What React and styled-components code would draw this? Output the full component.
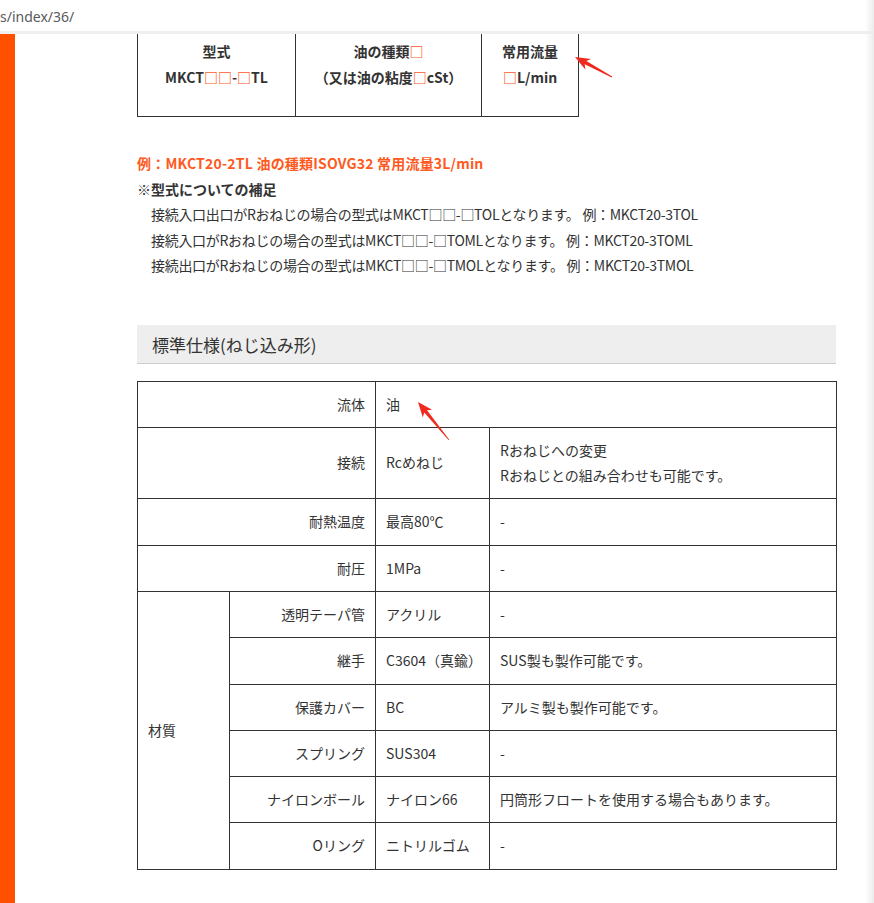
import styled, { createGlobalStyle } from 'styled-components';

const GlobalStyle = createGlobalStyle`
  html, body {
    margin: 0;
    padding: 0;
    background: #ffffff;
  }
  body {
    font-family: "Noto Sans CJK JP", "Noto Sans", sans-serif;
    color: #333333;
  }
`;

const Page = styled.div`
  position: relative;
  width: 874px;
  height: 903px;
  overflow: hidden;
  background: #ffffff;

  &::after {
    content: '';
    position: absolute;
    top: 0;
    right: 0;
    width: 9px;
    height: 100%;
    background: linear-gradient(to right, rgba(235, 235, 235, 0), #ececec);
    pointer-events: none;
  }
`;

const AddressBar = styled.div`
  height: 31px;
  border-bottom: 3px solid #efefef;
  font-family: "Noto Sans", "Open Sans", sans-serif;
  font-size: 14px;
  line-height: 33px;
  color: #5a5a5a;
  white-space: nowrap;
`;

const Main = styled.div`
  display: flex;
  height: 869px;
`;

const SideBar = styled.div`
  width: 15px;
  flex: none;
  background: #ff5000;
`;

const Content = styled.div`
  padding-left: 122px;
  width: 699px;
`;

const ModelTable = styled.table`
  border-collapse: collapse;
  table-layout: fixed;
  width: 441px;

  & td {
    border: 1px solid #333333;
    border-top: none;
    padding: 4px 0 26px;
    text-align: center;
    vertical-align: top;
    font-size: 14px;
    font-weight: 700;
    line-height: 26px;
    color: #333333;
  }
`;

const Box = styled.span`
  color: #ff5a1e;
`;

const Example = styled.p`
  margin: 34px 0 0;
  font-size: 14px;
  line-height: 25.5px;
  font-weight: 700;
  letter-spacing: 0.2px;
  color: #ff5a1e;
`;

const NoteTitle = styled.p`
  margin: 0;
  font-size: 14px;
  line-height: 25.5px;
  font-weight: 700;
  color: #333333;
`;

const NoteLine = styled.p`
  margin: 0;
  padding-left: 14px;
  font-size: 14px;
  line-height: 25.5px;
  letter-spacing: -0.3px;
  color: #333333;
  white-space: nowrap;
`;

const SectionTitle = styled.h2`
  margin: 46px 0 0;
  height: 38px;
  padding-left: 15px;
  background: #eeeeee;
  border-bottom: 1px solid #cccccc;
  font-size: 17px;
  font-weight: 400;
  line-height: 40px;
  color: #333333;
`;

const SpecTable = styled.table`
  margin-top: 17px;
  border-collapse: collapse;
  table-layout: fixed;
  width: 699px;
`;

const Cell = styled.td`
  border: 1px solid #333333;
  padding: 10px 10px;
  font-size: 14px;
  line-height: 25.3px;
  color: #333333;
  text-align: ${(p) => (p.$label ? 'right' : 'left')};
  vertical-align: middle;
  white-space: nowrap;
`;

const Overlay = styled.svg`
  position: absolute;
  left: 0;
  top: 0;
  pointer-events: none;
`;

const arrowPoints = (tail, tip) => {
  const dx = tip[0] - tail[0];
  const dy = tip[1] - tail[1];
  const len = Math.hypot(dx, dy);
  const ux = dx / len;
  const uy = dy / len;
  const nx = -uy;
  const ny = ux;
  const head = 15;
  const base = [tip[0] - ux * head, tip[1] - uy * head];
  const notch = [tip[0] - ux * (head - 3), tip[1] - uy * (head - 3)];
  const pts = [
    [tail[0] + nx * 0.4, tail[1] + ny * 0.4],
    [notch[0] + nx * 1.8, notch[1] + ny * 1.8],
    [base[0] + nx * 6, base[1] + ny * 6],
    tip,
    [base[0] - nx * 6, base[1] - ny * 6],
    [notch[0] - nx * 1.8, notch[1] - ny * 1.8],
    [tail[0] - nx * 0.4, tail[1] - ny * 0.4],
  ];
  return pts.map((p) => `${p[0].toFixed(1)},${p[1].toFixed(1)}`).join(' ');
};

const specRows = [
  { label: '流体', value: '油', wide: true },
  { label: '接続', value: 'Rcめねじ', note: ['Rおねじへの変更', 'Rおねじとの組み合わせも可能です。'] },
  { label: '耐熱温度', value: '最高80℃', note: ['-'] },
  { label: '耐圧', value: '1MPa', note: ['-'] },
];

const materialRows = [
  { label: '透明テーパ管', value: 'アクリル', note: '-' },
  { label: '継手', value: 'C3604（真鍮）', note: 'SUS製も製作可能です。' },
  { label: '保護カバー', value: 'BC', note: 'アルミ製も製作可能です。' },
  { label: 'スプリング', value: 'SUS304', note: '-' },
  { label: 'ナイロンボール', value: 'ナイロン66', note: '円筒形フロートを使用する場合もあります。' },
  { label: 'Oリング', value: 'ニトリルゴム', note: '-' },
];

const App = () => {
  return (
    <Page>
      <GlobalStyle />
      <AddressBar>s/index/36/</AddressBar>
      <Main>
        <SideBar />
        <Content>
          <ModelTable>
            <colgroup>
              <col style={{ width: 158 }} />
              <col style={{ width: 186 }} />
              <col style={{ width: 97 }} />
            </colgroup>
            <tbody>
              <tr>
                <td>
                  型式
                  <br />
                  MKCT<Box>□□</Box>-<Box>□</Box>TL
                </td>
                <td>
                  油の種類<Box>□</Box>
                  <br />
                  （又は油の粘度<Box>□</Box>cSt）
                </td>
                <td>
                  常用流量
                  <br />
                  <Box>□</Box>L/min
                </td>
              </tr>
            </tbody>
          </ModelTable>

          <Example>例：MKCT20-2TL 油の種類ISOVG32 常用流量3L/min</Example>
          <NoteTitle>※型式についての補足</NoteTitle>
          <NoteLine>接続入口出口がRおねじの場合の型式はMKCT□□-□TOLとなります。 例：MKCT20-3TOL</NoteLine>
          <NoteLine>接続入口がRおねじの場合の型式はMKCT□□-□TOMLとなります。 例：MKCT20-3TOML</NoteLine>
          <NoteLine>接続出口がRおねじの場合の型式はMKCT□□-□TMOLとなります。 例：MKCT20-3TMOL</NoteLine>

          <SectionTitle>標準仕様(ねじ込み形)</SectionTitle>

          <SpecTable>
            <colgroup>
              <col style={{ width: 92 }} />
              <col style={{ width: 146 }} />
              <col style={{ width: 114 }} />
              <col style={{ width: 347 }} />
            </colgroup>
            <tbody>
              {specRows.map((row) => (
                <tr key={row.label}>
                  <Cell $label colSpan={2}>
                    {row.label}
                  </Cell>
                  {row.wide ? (
                    <Cell colSpan={2}>{row.value}</Cell>
                  ) : (
                    <>
                      <Cell>{row.value}</Cell>
                      <Cell>
                        {row.note.map((line, i) => (
                          <div key={i}>{line}</div>
                        ))}
                      </Cell>
                    </>
                  )}
                </tr>
              ))}
              {materialRows.map((row, i) => (
                <tr key={row.label}>
                  {i === 0 && <Cell rowSpan={materialRows.length}>材質</Cell>}
                  <Cell $label>{row.label}</Cell>
                  <Cell>{row.value}</Cell>
                  <Cell>{row.note}</Cell>
                </tr>
              ))}
            </tbody>
          </SpecTable>
        </Content>
      </Main>

      <Overlay width="874" height="903" viewBox="0 0 874 903">
        <polygon points={arrowPoints([612, 77], [575, 57])} fill="#f02a1e" />
        <polygon points={arrowPoints([449, 440], [418, 402])} fill="#f02a1e" />
      </Overlay>
    </Page>
  );
};

export default App;
